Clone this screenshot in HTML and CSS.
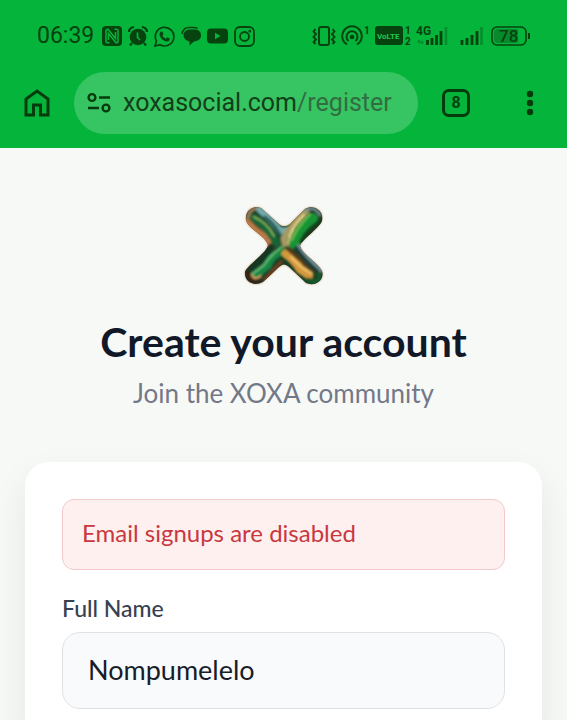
FILE: index.html
```html
<!DOCTYPE html>
<html lang="en">
<head>
<meta charset="utf-8">
<meta name="viewport" content="width=device-width, initial-scale=1">
<title>Create your account</title>
<link rel="stylesheet" href="styles.css">
</head>
<body>
<div class="screen">
  <header class="chrome">
    <div class="status">
      <div class="status-group">
        <span class="clock">06:39</span>
        <svg width="20" height="20" viewBox="0 0 20 20"><rect width="20" height="20" rx="4" fill="#07430f"/><path d="M7.500 16.800H5.500Q4 16.800 4 15V5Q4 3.200 6 3.200L13.500 12.500V6M12.500 3.200h2Q16 3.200 16 5v10q0 1.800-2 1.800L6.500 7.500V14" fill="none" stroke="#05b43b" stroke-width="1.500"/></svg>
        <svg width="20" height="20" viewBox="0 0 20 20"><circle cx="10" cy="11" r="8.300" fill="#07430f"/><path d="M1 6Q1 2 6 1M19 6q0-4-5-5M4 17l-2 2.500M16 17l2 2.500" fill="none" stroke="#07430f" stroke-width="2.200"/><path d="M9.500 6.500v5l2.500 2.500" fill="none" stroke="#05b43b" stroke-width="1.700"/></svg>
        <svg width="21" height="21" viewBox="0 0 21 21"><path d="M1 20l1.400-5A9.300 9.300 0 1 1 6 18.700z" fill="none" stroke="#07430f" stroke-width="1.700"/><path d="M7 5.500l1.500.3 1 2.400-1.100 1.400q1.200 2.200 3.300 3.100l1.400-1.400 2.600 1.200q0 3-3 3-6-1-7.200-7Q5.500 6.500 7 5.500z" fill="#07430f"/></svg>
        <svg width="20" height="20" viewBox="0 0 20 20"><path d="M2.500 8Q4 3.500 9 3.500h5q6 .5 6 6 0 5-7 6l-4.500 4v-4Q2 14 2.500 8z" fill="#07430f"/><path d="M1 8Q2 1.500 8 1.500h4q3 0 4.500 1" fill="none" stroke="#07430f" stroke-width="1.600"/></svg>
        <svg width="21" height="20" viewBox="0 0 21 20"><rect y="2.500" width="21" height="15" rx="4" fill="#07430f"/><path d="M8 6.800v6.400l5.500-3.200z" fill="#05b43b"/></svg>
        <svg width="21" height="21" viewBox="0 0 21 21" fill="none" stroke="#07430f" stroke-width="1.800"><rect x="1" y="1" width="19" height="19" rx="5"/><circle cx="10.500" cy="10.500" r="4.500"/><circle cx="15.800" cy="5.200" r=".5"/></svg>
      </div>
      <div class="status-group">
        <svg width="24" height="20" viewBox="0 0 24 20" fill="none" stroke="#07430f" stroke-width="2"><rect x="7" y="1" width="10" height="18" rx="2"/><path d="M3.500 3L1.500 5.500 4 8l-2.500 3L4 13.500 1.500 16l2 2M20.500 3l2 2.500L20 8l2.500 3-2.500 2.500 2.500 2.500-2 2" stroke-width="1.900"/></svg>
        <svg width="29" height="22" viewBox="0 0 29 22"><g fill="none" stroke="#07430f" stroke-width="2"><path d="M6 19.500A9.800 9.800 0 1 1 16 19.500"/><path d="M7.500 16A5.500 5.500 0 1 1 14.500 16"/></g><circle cx="11" cy="12" r="2.300" fill="#07430f"/><text class="tiny" x="23" y="9">1</text></svg>
        <svg width="36" height="22" viewBox="0 0 36 22"><rect y="1" width="28" height="19" rx="3" fill="#07430f"/><text class="volte" x="2" y="14">VoLTE</text><text class="tiny" x="30" y="9">1</text><text class="tiny" x="30" y="20">2</text></svg>
        <svg width="32" height="22" viewBox="0 0 32 22"><text class="network" x="0" y="10">4G</text><path d="M11.500 20v-5M16 20v-7M20.500 20V10M25 20V6" stroke="#07430f" stroke-width="2.800"/><path d="M30 20V2M3 15v3M6 16v3" stroke="#078d2d" stroke-width="2.500"/></svg>
        <svg class="second-sim" width="23" height="22" viewBox="0 0 23 22"><path d="M2 20v-5M7 20v-7M12 20V10M17 20V6" stroke="#07430f" stroke-width="2.800"/><path d="M21.500 20V2" stroke="#078d2d" stroke-width="2.500"/></svg>
        <svg width="39" height="20" viewBox="0 0 39 20"><rect x="1" y="1" width="34" height="18" rx="5" fill="#05b43b" stroke="#07430f" stroke-width="1.600"/><path d="M7 3h20v14H7q-4 0-4-4V7q0-4 4-4z" fill="#078a2c"/><path d="M38 7v6" stroke="#07430f" stroke-width="2"/><text class="battery" x="8" y="16">78</text></svg>
      </div>
    </div>
    <div class="toolbar">
      <button class="tool" aria-label="Home"><svg width="26" height="28" viewBox="0 0 26 28"><path d="M2 26V10L13 2l11 8v16h-7.500V16h-7v10z" fill="none" stroke="#063c0d" stroke-width="3"/></svg></button>
      <button class="address">
        <svg width="24" height="22" viewBox="0 0 24 22" fill="none" stroke="#063c0d" stroke-width="2.400"><circle cx="5" cy="5.500" r="3.400"/><path d="M12 5.500h11M1 16h11"/><circle cx="19" cy="16" r="3.400"/></svg>
        <span class="url">xoxasocial.com<span class="path">/register</span></span>
      </button>
      <button class="tool tabs" aria-label="Open tabs">8</button>
      <button class="tool menu" aria-label="Menu"><svg width="8" height="26" viewBox="0 0 8 26" fill="#063c0d"><circle cx="4" cy="4" r="3.200"/><circle cx="4" cy="13" r="3.200"/><circle cx="4" cy="22" r="3.200"/></svg></button>
    </div>
  </header>
  <main class="page">
    <svg class="logo" width="82" height="82" viewBox="0 0 82 82" role="img" aria-label="XOXA">
      <defs>
        <clipPath id="shape"><path d="M3 15C2 6 9 0 18 3L37 20Q42 23 47 19L62 4C71-1 81 6 79 15 79 21 59 34 57 41 59 49 75 58 79 66 82 75 72 82 63 78L46 62Q41 57 36 62L20 77C11 82 1 77 2 67 4 60 24 48 25 40 22 30 5 24 3 15Z"/></clipPath>
        <filter id="soft" x="-10%" y="-10%" width="120%" height="120%"><feGaussianBlur stdDeviation=".9"/></filter>
        <filter id="glow" x="-10%" y="-10%" width="120%" height="120%"><feGaussianBlur stdDeviation="1.200"/></filter>
      </defs>
      <path filter="url(#glow)" d="M3 15C2 6 9 0 18 3L37 20Q42 23 47 19L62 4C71-1 81 6 79 15 79 21 59 34 57 41 59 49 75 58 79 66 82 75 72 82 63 78L46 62Q41 57 36 62L20 77C11 82 1 77 2 67 4 60 24 48 25 40 22 30 5 24 3 15Z" fill="#d79b70"/>
      <g clip-path="url(#shape)">
        <path d="M0 0h82v82H0z" fill="#163d24"/>
        <g fill="none" stroke-linecap="round" filter="url(#soft)">
          <path d="M4 17Q12 26 24 33L28 42" stroke="#bd7946" stroke-width="7"/>
          <path d="M5 12Q6 4 15 3" stroke="#987855" stroke-width="4"/>
          <path d="M11 13Q28 25 33 38" stroke="#126638" stroke-width="8"/>
          <path d="M11 12Q24 17 31 31" stroke="#83ad58" stroke-width="2"/>
          <path d="M17 5Q30 16 37 26L48 25" stroke="#75a9ac" stroke-width="7"/>
          <path d="M22 12Q33 20 39 34" stroke="#235c54" stroke-width="3"/>
          <path d="M63 6Q48 20 41 34L43 43" stroke="#a59a62" stroke-width="7"/>
          <path d="M61 10Q46 24 46 38" stroke="#f0d98b" stroke-width="2"/>
          <path d="M70 13Q53 25 51 39" stroke="#169536" stroke-width="10"/>
          <path d="M67 9Q54 22 49 35" stroke="#77bd52" stroke-width="2"/>
          <path d="M78 16L59 36" stroke="#123d1b" stroke-width="5"/>
          <path d="M63 5Q72 1 77 10" stroke="#778a91" stroke-width="3"/>
          <path d="M28 42Q24 52 5 66" stroke="#123622" stroke-width="7"/>
          <path d="M43 45Q29 49 25 60L13 70" stroke="#168645" stroke-width="8"/>
          <path d="M38 42Q26 52 21 60L9 69" stroke="#6bc077" stroke-width="2"/>
          <path d="M5 68Q5 78 16 75" stroke="#372215" stroke-width="5"/>
          <path d="M9 70Q11 76 18 71" stroke="#dca064" stroke-width="2"/>
          <path d="M38 57L22 74" stroke="#6f3e20" stroke-width="4"/>
          <path d="M43 49Q51 54 57 64L66 70" stroke="#d4983c" stroke-width="9"/>
          <path d="M44 43Q57 54 70 66" stroke="#513b1c" stroke-width="4"/>
          <path d="M48 52Q59 64 68 68" stroke="#f4c66d" stroke-width="2"/>
          <path d="M57 42L77 65" stroke="#728d91" stroke-width="6"/>
          <path d="M53 43Q60 54 74 66" stroke="#183d35" stroke-width="4"/>
          <path d="M65 75Q78 80 76 69" stroke="#15572a" stroke-width="5"/>
        </g>
      </g>
    </svg>
    <h1>Create your account</h1>
    <p class="subtitle">Join the XOXA community</p>
    <form class="card">
      <div class="alert" role="alert">Email signups are disabled</div>
      <label for="full-name">Full Name</label>
      <input id="full-name" type="text" value="Nompumelelo">
    </form>
  </main>
</div>
</body>
</html>
```
FILE: styles.css
```css
* { box-sizing: border-box; }
body { margin: 0; font-family: Lato, "Liberation Sans", sans-serif; background: #f7f9f7; color: #111827; }
button { border: 0; padding: 0; background: none; color: inherit; font: inherit; }
svg { display: block; flex: none; }
.screen { display: flex; flex-direction: column; height: 100vh; overflow: hidden; }
.chrome { flex: none; background: #05b43b; color: #07430f; padding-bottom: 14px; }
.status { display: flex; justify-content: space-between; align-items: center; height: 72px; padding: 0 37px; }
.status-group { display: flex; align-items: center; gap: 6px; }
.status-group:last-child { gap: 5px; }
.clock { margin-right: 2px; font: 23px/28px Roboto, sans-serif; }
.second-sim { margin: 0 3px 0 7px; }
.tiny { font: 700 10px Roboto, sans-serif; fill: #07430f; }
.network { font: 700 12px Roboto, sans-serif; fill: #07430f; }
.volte { font: 700 8px Roboto, sans-serif; fill: #25c554; }
.battery { font: 500 17px Roboto, sans-serif; fill: #07430f; }
.toolbar { display: flex; align-items: center; padding: 0 24px; }
.tool { display: flex; flex: none; }
.address { display: flex; align-items: center; flex: 1; gap: 12px; height: 62px; margin: 0 24px; padding: 0 13px; border-radius: 31px; background: #37c563; text-align: left; }
.url { font: 25px/32px Roboto, sans-serif; color: #123f18; white-space: nowrap; }
.path { color: #326d40; }
.tabs { justify-content: center; align-items: center; width: 28px; height: 28px; border: 3px solid #063c0d; border-radius: 7px; font: 700 16px/20px Roboto, sans-serif; }
.menu { margin: 0 9px 0 56px; }
.page { display: flex; flex-direction: column; flex: none; align-items: center; padding: 57px 25px; }
h1 { margin: 31px 0 0; font-size: 41px; line-height: 48px; font-weight: 700; }
.subtitle { margin: 11px 0 0; font-size: 26px; line-height: 32px; color: #737887; }
.card { display: flex; flex-direction: column; align-self: stretch; margin-top: 53px; padding: 37px; border-radius: 24px; background: #fff; box-shadow: 0 16px 36px rgba(20, 30, 25, .08); }
.alert { padding: 16px 19px 20px; border: 1px solid #f3c9cd; border-radius: 12px; background: #fef0ef; color: #c93840; font-size: 24px; line-height: 33px; }
label { margin: 23px 0 9px; font-size: 23px; line-height: 30px; font-weight: 500; color: #374151; }
input { width: 100%; height: 77px; padding: 0 25px 3px; border: 1px solid #dfe2e5; border-radius: 18px; background: #f9fafc; color: #171d29; font: 27px/32px Lato, "Liberation Sans", sans-serif; }
```
